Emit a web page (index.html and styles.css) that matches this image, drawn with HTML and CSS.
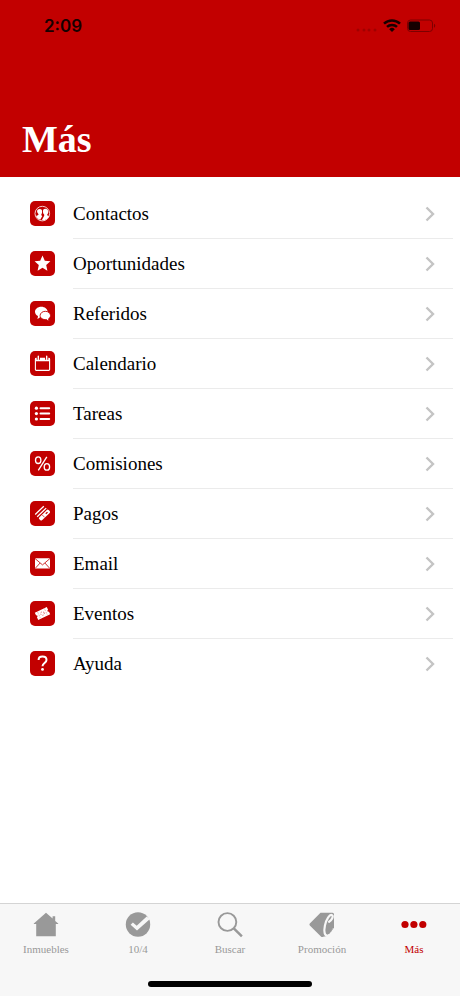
FILE: index.html
```html
<!DOCTYPE html>
<html lang="es">
<head>
<meta charset="utf-8">
<meta name="viewport" content="width=device-width, initial-scale=1">
<title>Más</title>
<link rel="stylesheet" href="styles.css">
</head>
<body>
<header class="header">
  <div class="status">
    <time class="clock">2:09</time>
    <div class="indicators">
      <svg class="signal" width="22" height="14" viewBox="0 0 22 14" aria-hidden="true"><circle cx="2" cy="11" r="1.500"/><circle cx="8" cy="11" r="1.500"/><circle cx="13" cy="11" r="1.500"/><circle cx="19" cy="11" r="1.500"/></svg>
      <svg width="18" height="14" viewBox="0 0 18 14" aria-hidden="true"><g fill="none" stroke="#160000" stroke-width="2.500"><path d="M1 4.700a11.500 11.500 0 0 1 16 0"/><path d="M4 7.900a7.200 7.200 0 0 1 10 0"/></g><path d="M9 13 6.200 10.200a4 4 0 0 1 5.600 0z" fill="#160000"/></svg>
      <svg width="30" height="14" viewBox="0 0 30 14" aria-hidden="true"><rect x="1.500" y="1" width="25" height="11.500" rx="3" fill="none" stroke="#7c0000"/><rect x="2.500" y="2.500" width="11.500" height="8.500" rx="1.500" fill="#160000"/><path d="M28 4.700a2.200 2.200 0 0 1 0 4z" fill="#7c0000"/></svg>
    </div>
  </div>
  <h1 class="title">Más</h1>
</header>

<main class="content">
  <ul class="menu">
    <li><a class="row" href="#contactos">
      <svg class="badge" viewBox="0 0 25 25" aria-hidden="true"><circle cx="12.300" cy="12.600" r="7.300" fill="none" stroke="#fff" stroke-width=".8"/><path fill="#fff" d="M9.600 8c2 0 2.700 1.300 2.500 3-.1 1.200-.4 1.800-.8 2.400v.9l1 .6-2.100 3.900c-2-.7-3.600-2-4.200-3.800l2.400-1.100v-.8c-.8-.8-1.200-1.500-1.300-2.500C6.900 9 7.900 8 9.600 8zM15.300 7.800c2 0 3.100 1.400 3 3.100-.1 1.100-.6 1.900-1.100 2.500v.8l1.900 1.100c-1.200 2.700-4 4.300-7.300 4l2.400-4.600v-1.200c-.7-.6-1.200-1.500-1.200-2.600-.1-1.900.4-3.100 2.300-3.100z"/></svg>
      <span class="label">Contactos</span><svg class="chevron" viewBox="0 0 10 16" aria-hidden="true"><path d="m1.500 1.500 6.500 6.500-6.500 6.500"/></svg></a></li>
    <li><a class="row" href="#oportunidades">
      <svg class="badge" viewBox="0 0 25 25" aria-hidden="true"><path fill="#fff" d="m12.500 4.600 2.300 5.100 5.600.6-4.200 3.800 1.200 5.600-4.900-2.900-4.900 2.900 1.200-5.600-4.200-3.800 5.600-.6z"/></svg>
      <span class="label">Oportunidades</span><svg class="chevron" viewBox="0 0 10 16" aria-hidden="true"><path d="m1.500 1.500 6.500 6.500-6.500 6.500"/></svg></a></li>
    <li><a class="row" href="#referidos">
      <svg class="badge" viewBox="0 0 25 25" aria-hidden="true"><path fill="#fff" d="M11.300 5.800c3.500 0 6.300 2.200 6.300 5s-2.800 5-6.300 5l-1 0c-.7 1-1.900 2-3.200 2.100.7-.8.900-1.900.8-2.800C6.100 14.200 5 12.600 5 10.800c0-2.800 2.800-5 6.300-5z"/><path fill="#fff" stroke="#c20000" stroke-width=".9" d="M15.300 10.300c2.900 0 5.200 1.900 5.200 4.300 0 1.300-.7 2.500-1.900 3.200 0 .9.300 1.600 1 2.200-1.400-.1-2.500-.6-3.200-1.400-3.500.4-6.300-1.500-6.300-4 0-2.400 2.300-4.300 5.200-4.300z"/></svg>
      <span class="label">Referidos</span><svg class="chevron" viewBox="0 0 10 16" aria-hidden="true"><path d="m1.500 1.500 6.500 6.500-6.500 6.500"/></svg></a></li>
    <li><a class="row" href="#calendario">
      <svg class="badge" viewBox="0 0 25 25" aria-hidden="true"><rect x="5.400" y="7.400" width="14.200" height="12" rx=".8" fill="none" stroke="#fff" stroke-width="1.100"/><path fill="#fff" d="M5.400 7.300h14.200v2.900H5.400z"/><path d="M8.300 5v3.700M16.700 5v3.700" stroke="#c20000" stroke-width="3.200"/><path d="M8.300 5.300v3.200M16.700 5.300v3.200" stroke="#fff" stroke-width="1.400" stroke-linecap="round"/></svg>
      <span class="label">Calendario</span><svg class="chevron" viewBox="0 0 10 16" aria-hidden="true"><path d="m1.500 1.500 6.500 6.500-6.500 6.500"/></svg></a></li>
    <li><a class="row" href="#tareas">
      <svg class="badge" viewBox="0 0 25 25" aria-hidden="true"><g fill="#fff"><circle cx="6.400" cy="7.200" r="1.600"/><circle cx="6.400" cy="12.600" r="1.600"/><circle cx="6.400" cy="18" r="1.600"/></g><path d="M10.500 7.200h8.700M10.500 12.600h8.700M10.500 18h8.700" stroke="#fff" stroke-width="2" stroke-linecap="round"/></svg>
      <span class="label">Tareas</span><svg class="chevron" viewBox="0 0 10 16" aria-hidden="true"><path d="m1.500 1.500 6.500 6.500-6.500 6.500"/></svg></a></li>
    <li><a class="row" href="#comisiones">
      <svg class="badge" viewBox="0 0 25 25" aria-hidden="true"><g fill="none" stroke="#fff" stroke-width="1.300"><ellipse cx="8.200" cy="9.200" rx="2.700" ry="3.300"/><ellipse cx="16.900" cy="15.900" rx="2.700" ry="3.300"/><path d="M16.800 5.800 8.300 19.300"/></g></svg>
      <span class="label">Comisiones</span><svg class="chevron" viewBox="0 0 10 16" aria-hidden="true"><path d="m1.500 1.500 6.500 6.500-6.500 6.500"/></svg></a></li>
    <li><a class="row" href="#pagos">
      <svg class="badge" viewBox="0 0 25 25" aria-hidden="true"><path d="M5.200 13.500 13.800 5.200M7.200 15.800l9-8.700" stroke="#fff" stroke-width="1.300"/><path fill="#fff" d="m9.200 16.600 7.600-7.600q.9-.8 1.800 0l1.100 1q.8.900 0 1.900L12 19.300q-.8.600-1.600 0l-1.300-1.300q-.6-.7.100-1.400z"/><path d="m12.300 14 2.300 2.300" stroke="#c20000" stroke-width=".7"/><path d="m15.800 12.800 1.700-1.700" stroke="#c20000" stroke-width="1.300"/></svg>
      <span class="label">Pagos</span><svg class="chevron" viewBox="0 0 10 16" aria-hidden="true"><path d="m1.500 1.500 6.500 6.500-6.500 6.500"/></svg></a></li>
    <li><a class="row" href="#email">
      <svg class="badge" viewBox="0 0 25 25" aria-hidden="true"><rect x="5" y="7.200" width="15" height="10.400" rx=".6" fill="#fff"/><path d="m5 7.500 7.500 6.400L20 7.500M5.200 17.400l4.900-5.400M19.800 17.400 14.900 12" fill="none" stroke="#c20000" stroke-width=".8"/></svg>
      <span class="label">Email</span><svg class="chevron" viewBox="0 0 10 16" aria-hidden="true"><path d="m1.500 1.500 6.500 6.500-6.500 6.500"/></svg></a></li>
    <li><a class="row" href="#eventos">
      <svg class="badge" viewBox="0 0 25 25" aria-hidden="true"><g transform="rotate(-25 12.500 12.500)"><path fill="#fff" d="M5.900 8.500h13.200v3a1 1 0 0 0 0 2v3H5.900v-3a1 1 0 0 0 0-2z"/><path d="M8.700 9v7M16.300 9v7" stroke="#c20000" stroke-width=".4" stroke-dasharray=".8 1"/><circle cx="12.500" cy="12.500" r="1.800" fill="none" stroke="#c20000" stroke-width=".5" stroke-dasharray="1.200 1"/></g></svg>
      <span class="label">Eventos</span><svg class="chevron" viewBox="0 0 10 16" aria-hidden="true"><path d="m1.500 1.500 6.500 6.500-6.500 6.500"/></svg></a></li>
    <li><a class="row" href="#ayuda">
      <svg class="badge" viewBox="0 0 25 25" aria-hidden="true"><path d="M8.600 9c0-2.100 1.600-3.400 3.900-3.400s4 1.300 4 3.300c0 3-4 3.100-4 6.300" fill="none" stroke="#fff" stroke-width="2"/><circle cx="12.500" cy="18.400" r="1.400" fill="#fff"/></svg>
      <span class="label">Ayuda</span><svg class="chevron" viewBox="0 0 10 16" aria-hidden="true"><path d="m1.500 1.500 6.500 6.500-6.500 6.500"/></svg></a></li>
  </ul>
</main>

<footer class="footer">
  <nav class="tabs">
    <a class="tab" href="#inmuebles"><svg class="tab-icon" viewBox="0 0 26 26" aria-hidden="true"><path fill="currentColor" d="M13 .8.8 11.600V12h2.400v12.200h19.600V12h2.400v-.4L22.200 9V4.200h-2.600v2.400z"/></svg><span>Inmuebles</span></a>
    <a class="tab" href="#diez-cuatro"><svg class="tab-icon" viewBox="0 0 26 26" aria-hidden="true"><circle cx="13" cy="12.500" r="12.200" fill="currentColor"/><path fill="#f7f7f7" d="m5.600 12.800 2.300-2.200 3.800 3.100 10-9.100 3.300 2.300L12 18.500z"/></svg><span>10/4</span></a>
    <a class="tab" href="#buscar"><svg class="tab-icon" viewBox="0 0 26 26" aria-hidden="true"><circle cx="10.400" cy="10" r="8.900" fill="none" stroke="currentColor" stroke-width="1.900"/><path d="m16.800 16.400 8.100 8" stroke="currentColor" stroke-width="2.500"/></svg><span>Buscar</span></a>
    <a class="tab" href="#promocion"><svg class="tab-icon" viewBox="0 0 26 26" aria-hidden="true"><path fill="currentColor" d="M11.500.7h12q1.500 0 1.500 1.600v15.500l-5.500 6-5.300 1q-1 .4-2 0L.8 13.600q-.8-1 0-2z"/><path d="m25.500 15-5 8.500-4.500 3h10z" fill="#f7f7f7"/><path d="M20.100 9.800c2.700-1.500 4.700-5.600 2.900-6.700-2.200-1.200-5.900 4.400-7.100 10.500-1.200 6.100-.3 10.300 2.500 10 2.500-.2 4.500-3.200 5.800-6.100" fill="none" stroke="#f7f7f7" stroke-width="2.200" stroke-linecap="round"/><path d="M17.900 13.500c-1 5.200-.5 8.500 1 8.300 1.800-.2 3.500-2.800 4.800-5.300" fill="none" stroke="currentColor" stroke-width="1"/></svg><span>Promoción</span></a>
    <a class="tab active" href="#mas" aria-current="page"><svg class="tab-icon" viewBox="0 0 26 26" aria-hidden="true"><g fill="currentColor"><circle cx="4" cy="12.500" r="3.600"/><circle cx="12.900" cy="12.500" r="3.600"/><circle cx="21.800" cy="12.500" r="3.600"/></g></svg><span>Más</span></a>
  </nav>
  <div class="home-bar"></div>
</footer>
</body>
</html>
```
FILE: styles.css
```css
* {
  box-sizing: border-box;
}

body {
  margin: 0;
  min-height: 100vh;
  display: flex;
  flex-direction: column;
  background: #fff;
  color: #000;
  font-family: "Liberation Serif", "Times New Roman", serif;
}

a {
  color: inherit;
  text-decoration: none;
}

.header {
  background: #c20000;
  padding: 14px 22px 16px;
}

.status {
  display: flex;
  align-items: center;
  justify-content: space-between;
  height: 24px;
  padding: 0 2px 0 22px;
}

.clock {
  color: #160000;
  font: 600 17px/24px Inter, sans-serif;
}

.indicators {
  display: flex;
  align-items: center;
  gap: 5px;
}

.signal {
  fill: #a00000;
}

.title {
  margin: 79px 0 0;
  color: #fff;
  font-size: 38px;
  line-height: 44px;
  font-weight: 700;
}

.content {
  flex: 1;
  padding: 12px 7px 12px 30px;
}

.menu {
  margin: 0;
  padding: 0;
  list-style: none;
}

.row {
  display: grid;
  grid-template-columns: 25px 1fr 10px;
  column-gap: 18px;
  align-items: center;
  height: 50px;
  padding-right: 18px;
  font-size: 19px;
  line-height: 24px;
  background: linear-gradient(#ebebeb, #ebebeb) 43px 100% / 100% 1px no-repeat;
}

li:last-child .row {
  background: none;
}

.badge {
  width: 25px;
  height: 25px;
  margin-bottom: 1px;
  border-radius: 5px;
  background: #c20000;
}

.chevron {
  width: 10px;
  height: 16px;
  fill: none;
  stroke: #c4c4c4;
  stroke-width: 2.4px;
}

.footer {
  padding: 8px 0 9px;
  border-top: 1px solid #d4d4d4;
  background: #f7f7f7;
}

.tabs {
  display: grid;
  grid-template-columns: repeat(5, 1fr);
}

.tab {
  display: flex;
  flex-direction: column;
  align-items: center;
  gap: 4px;
  color: #999;
  font-size: 11px;
  line-height: 14px;
}

.tab-icon {
  width: 26px;
  height: 26px;
}

.active {
  color: #c20000;
}

.home-bar {
  width: 164px;
  height: 6px;
  margin: 25px auto 0;
  border-radius: 3px;
  background: #000;
}
```
